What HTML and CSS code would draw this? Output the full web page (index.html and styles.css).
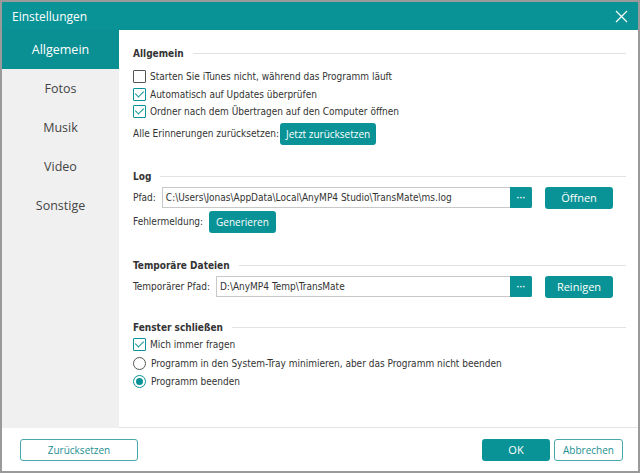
FILE: index.html
```html
<!DOCTYPE html>
<html lang="de">
<head>
    <meta charset="UTF-8">
    <title>Einstellungen</title>
    <link rel="stylesheet" href="styles.css">
</head>
<body>
<div class="window">
    <div class="titlebar">
        <span class="title">Einstellungen</span>
        <svg class="close" width="13" height="13" viewBox="0 0 13 13"><path d="M1 1L12 12M12 1L1 12" stroke="#fff" stroke-width="1.2" fill="none"/></svg>
    </div>
    <div class="body">
        <nav class="sidebar">
            <div class="nav-item active">Allgemein</div>
            <div class="nav-item">Fotos</div>
            <div class="nav-item">Musik</div>
            <div class="nav-item">Video</div>
            <div class="nav-item">Sonstige</div>
        </nav>
        <main class="content">
            <div class="section-head"><span>Allgemein</span></div>
            <div class="opts">
                <label class="opt"><span class="check"></span>Starten Sie iTunes nicht, während das Programm läuft</label>
                <label class="opt"><span class="check on"></span>Automatisch auf Updates überprüfen</label>
                <label class="opt"><span class="check on"></span>Ordner nach dem Übertragen auf den Computer öffnen</label>
            </div>
            <div class="row reset-row">Alle Erinnerungen zurücksetzen:<button class="btn">Jetzt zurücksetzen</button></div>

            <div class="section-head log-head"><span>Log</span></div>
            <div class="row path-row">
                <span class="lbl">Pfad:</span>
                <div class="path"><span class="path-text">C:\Users\Jonas\AppData\Local\AnyMP4 Studio\TransMate\ms.log</span><button class="dots">&middot;&middot;&middot;</button></div>
                <button class="btn wide">Öffnen</button>
            </div>
            <div class="row err-row"><span class="lbl">Fehlermeldung:</span><button class="btn">Generieren</button></div>

            <div class="section-head temp-head"><span>Temporäre Dateien</span></div>
            <div class="row path-row">
                <span class="lbl">Temporärer Pfad:</span>
                <div class="path"><span class="path-text">D:\AnyMP4 Temp\TransMate</span><button class="dots">&middot;&middot;&middot;</button></div>
                <button class="btn wide">Reinigen</button>
            </div>

            <div class="section-head close-head"><span>Fenster schließen</span></div>
            <div class="opts">
                <label class="opt"><span class="check on"></span>Mich immer fragen</label>
                <label class="opt"><span class="radio"></span>Programm in den System-Tray minimieren, aber das Programm nicht beenden</label>
                <label class="opt"><span class="radio on"></span>Programm beenden</label>
            </div>
        </main>
    </div>
    <footer class="footer">
        <button class="btn-outline">Zurücksetzen</button>
        <div class="footer-right">
            <button class="btn ok">OK</button>
            <button class="btn-outline small">Abbrechen</button>
        </div>
    </footer>
</div>
</body>
</html>
```

FILE: styles.css
```css
* {
    margin: 0;
    padding: 0;
    box-sizing: border-box;
}
body {
    width: 640px;
    height: 473px;
    background: #fff;
    font-family: "DejaVu Sans Condensed", "DejaVu Sans", sans-serif;
    font-size: 10px;
    color: #333;
}
.window {
    width: 640px;
    height: 473px;
    border: 2px solid #9a9a9a;
    display: flex;
    flex-direction: column;
}
.titlebar {
    height: 28px;
    background: #0a9396;
    display: flex;
    align-items: center;
    justify-content: space-between;
    padding: 0 10px 0 10px;
    color: #fff;
}
.title {
    font-family: "Open Sans", sans-serif;
    font-size: 12px;
}
.body {
    flex: 1;
    display: flex;
}
.sidebar {
    width: 117px;
    background: #f0f0f0;
}
.nav-item {
    height: 39px;
    display: flex;
    align-items: center;
    justify-content: center;
    font-family: "Open Sans", sans-serif;
    font-size: 12.5px;
    color: #444;
}
.nav-item.active {
    background: #0a8f92;
    color: #fff;
}
.content {
    flex: 1;
    padding: 15px 12px 0 14px;
    border-bottom: 1px solid #e4e4e4;
}
.section-head {
    height: 16px;
    display: flex;
    align-items: center;
    font-weight: bold;
    color: #333;
}
.section-head::after {
    content: "";
    flex: 1;
    height: 1px;
    background: #e2e2e2;
    margin-left: 9px;
}
.opts {
    margin-top: 7px;
}
.opt {
    height: 17.5px;
    display: flex;
    align-items: center;
}
.check {
    width: 13px;
    height: 13px;
    border: 1px solid #555;
    margin-right: 4px;
    border-radius: 1px;
    position: relative;
}
.check.on {
    border-color: #0a9396;
}
.check.on::after {
    content: "";
    position: absolute;
    left: 3px;
    top: 0;
    width: 4px;
    height: 7px;
    border: solid #0a9396;
    border-width: 0 1.5px 1.5px 0;
    transform: rotate(45deg);
}
.radio {
    width: 13px;
    height: 13px;
    border: 1px solid #555;
    border-radius: 50%;
    margin-right: 5px;
    position: relative;
}
.radio.on {
    border-color: #0a9396;
}
.radio.on::after {
    content: "";
    position: absolute;
    left: 2px;
    top: 2px;
    width: 7px;
    height: 7px;
    border-radius: 50%;
    background: #0a9396;
}
.row {
    display: flex;
    align-items: center;
}
.reset-row {
    margin-top: 2px;
    height: 22px;
}
.btn {
    background: #0a9396;
    color: #fff;
    border: none;
    border-radius: 3px;
    height: 22px;
    padding: 0 6px;
    font-family: "Open Sans", sans-serif;
    font-size: 10px;
}
.reset-row .btn {
    margin-left: 1px;
}
.log-head {
    margin-top: 24px;
}
.path-row {
    margin-top: 2px;
    height: 22px;
}
.lbl {
    margin-right: 6px;
}
.path {
    flex: 1;
    height: 21px;
    border: 1px solid #c8c8c8;
    display: flex;
    align-items: center;
}
.path-text {
    flex: 1;
    padding-left: 3px;
}
.dots {
    width: 22px;
    height: 21px;
    margin: -1px -1px -1px 0;
    background: #0a9396;
    border: none;
    color: #fff;
    font-size: 9px;
    font-weight: bold;
    border-radius: 0 2px 2px 0;
}
.btn.wide {
    width: 68px;
    margin-left: 13px;
    font-size: 11px;
    margin-right: 13px;
}
.err-row {
    margin-top: 2px;
}
.err-row .btn {
    margin-left: 0;
    padding: 0 7px;
}
.temp-head {
    margin-top: 25px;
}
.close-head {
    margin-top: 22px;
}
.close-head + .opts {
    margin-top: 0;
}
.close-head + .opts .opt {
    height: 18.5px;
}
.footer {
    height: 43px;
    display: flex;
    align-items: center;
    justify-content: space-between;
    padding: 0 15px 0 18px;
}
.footer-right {
    display: flex;
    gap: 4px;
}
.btn-outline {
    width: 118px;
    height: 22px;
    background: #fff;
    border: 1px solid #47a9ab;
    border-radius: 3px;
    color: #1b8f92;
    font-family: "Open Sans", sans-serif;
    font-size: 10px;
}
.btn-outline.small {
    width: 69px;
}
.btn.ok {
    width: 68px;
    font-size: 11px;
}
```
